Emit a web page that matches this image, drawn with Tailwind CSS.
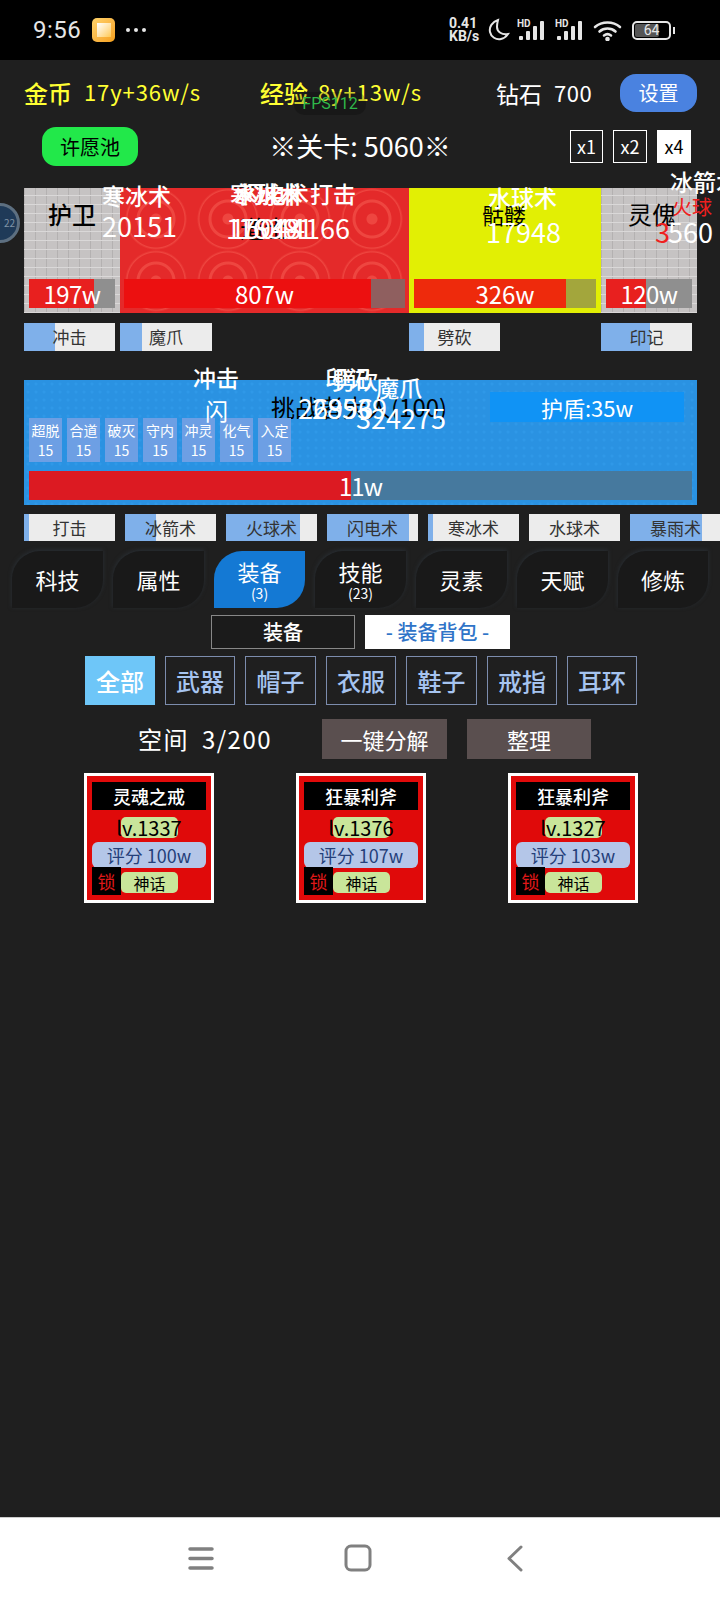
<!DOCTYPE html>
<html lang="zh">
<head>
<meta charset="UTF-8">
<meta name="viewport" content="width=device-width, initial-scale=1.0">
<title>挂机</title>
<script src="https://cdn.jsdelivr.net/npm/@tailwindcss/browser@4"></script>
</head>
<body class="bg-[#1f1f1f]">
<div class="relative w-[720px] h-[1600px] overflow-hidden flex flex-col bg-[#1f1f1f] text-white font-['Noto_Sans_CJK_SC',sans-serif]">

  <!-- status bar -->
  <div class="h-[60px] bg-black flex items-center pl-[33px] pr-[45px] font-['Roboto',sans-serif]">
    <span class="text-[24px] text-[#e6e6e6] tracking-[0.5px]">9:56</span>
    <div class="ml-[11px] w-[23px] h-[24px] rounded-[5px] bg-gradient-to-br from-[#ffd36a] to-[#f59f17] flex items-center justify-center">
      <div class="w-[14px] h-[14px] bg-gradient-to-br from-white to-[#ffc94d]"></div>
    </div>
    <span class="ml-[11px] flex gap-[4px]">
      <i class="w-[4px] h-[4px] rounded-full bg-[#e6e6e6]"></i><i class="w-[4px] h-[4px] rounded-full bg-[#e6e6e6]"></i><i class="w-[4px] h-[4px] rounded-full bg-[#e6e6e6]"></i>
    </span>
    <div class="ml-auto flex items-center text-[#e6e6e6]">
      <div class="text-[14px] leading-[13px] font-bold w-[33px]">0.41<br>KB/s</div>
      <svg class="ml-[6px]" width="22" height="24" viewBox="0 0 22 24" fill="none" stroke="#e6e6e6" stroke-width="2"><path d="M10 2C4 4 1 9 2 14c1 5 6 8 11 7 3-.6 5-2 7-5-6 1-11-2-11-7 0-3 .5-5 1-7z"/></svg>
      <svg class="ml-[7px]" width="30" height="22" viewBox="0 0 30 22" fill="#e6e6e6"><text x="0" y="8" font-size="10" font-weight="700" font-family="Roboto">HD</text><rect x="2" y="17" width="4" height="4" rx="1"/><rect x="9" y="12" width="4" height="9" rx="1"/><rect x="16" y="7" width="4" height="14" rx="1"/><rect x="23" y="2" width="4" height="19" rx="1"/></svg>
      <svg class="ml-[8px]" width="30" height="22" viewBox="0 0 30 22" fill="#e6e6e6"><text x="0" y="8" font-size="10" font-weight="700" font-family="Roboto">HD</text><rect x="2" y="17" width="4" height="4" rx="1"/><rect x="9" y="12" width="4" height="9" rx="1"/><rect x="16" y="7" width="4" height="14" rx="1"/><rect x="23" y="2" width="4" height="19" rx="1"/></svg>
      <svg class="ml-[8px]" width="29" height="22" viewBox="0 0 29 22" fill="none" stroke="#e6e6e6" stroke-width="2.6" stroke-linecap="round"><path d="M2 8c7-6 18-6 25 0"/><path d="M6.500 12.500c4.500-4 11.500-4 16 0"/><path d="M11 16.500c2-1.500 5-1.500 7 0"/><circle cx="14.500" cy="20" r="1" fill="#e6e6e6"/></svg>
      <div class="ml-[10px] relative w-[39px] h-[19px] rounded-[5px] border-2 border-[#e6e6e6] flex items-center justify-center text-[14px] leading-none">
        <div class="absolute left-[1px] top-[1px] bottom-[1px] w-[24px] bg-[#555] rounded-[2px]"></div>
        <span class="relative">64</span>
      </div>
      <div class="ml-[2px] w-[2px] h-[7px] bg-[#e6e6e6]"></div>
    </div>
  </div>

  <!-- currency row -->
  <div class="mt-[14px] h-[38px] flex items-center pl-[24px] text-[#ffff33]">
    <div class="w-[236px] flex items-center">
      <span class="text-[24px] font-medium">金币</span><span class="ml-[12px] text-[22px] tracking-[0.9px] -mt-[3px]">17y+36w/s</span>
    </div>
    <div class="w-[236px] flex items-center">
      <span class="text-[24px] font-medium">经验</span><span class="ml-[10px] text-[22px] tracking-[0.9px] -mt-[3px]">8y+13w/s</span>
    </div>
    <div class="w-[124px] flex items-center text-white">
      <span class="text-[23px]">钻石</span><span class="ml-[12px] text-[22px] tracking-[0.5px] -mt-[2px]">700</span>
    </div>
    <button class="w-[77px] h-[38px] rounded-[16px] bg-[#4a82e0] text-white text-[20px]">设置</button>
  </div>

  <!-- level row -->
  <div class="mt-[15px] h-[39px] flex items-center pl-[42px] relative">
    <button class="w-[96px] h-[39px] rounded-[14px] bg-[#22e84a] text-black text-[20px]">许愿池</button>
    <div class="absolute left-[265px] w-[190px] text-center text-[27px] whitespace-nowrap">※关卡: 5060※</div>
    <div class="ml-auto mr-[29px] flex gap-[10px] text-[18px]">
      <div class="w-[33px] h-[33px] border border-white flex items-center justify-center">x1</div>
      <div class="w-[34px] h-[33px] border border-white flex items-center justify-center">x2</div>
      <div class="w-[34px] h-[33px] bg-white text-black flex items-center justify-center">x4</div>
    </div>
  </div>

  <!-- enemies -->
  <div class="mt-[22px] ml-[24px] w-[673px] h-[125px] flex">
    <div class="w-[96px] p-[5px] flex flex-col justify-end bg-[#c6c3c3] bg-[repeating-linear-gradient(0deg,#dad8d8_0px,#dad8d8_1px,transparent_1px,transparent_9px),repeating-linear-gradient(90deg,#b4b1b1_0px,#b4b1b1_1px,transparent_1px,transparent_11px)]">
      <div class="relative h-[29px] bg-[#8f8f8f] flex items-center justify-center">
        <div class="absolute left-0 top-0 bottom-0 w-[65px] bg-[#e8201f]"></div>
        <span class="relative text-[24px] leading-none tracking-[-0.5px]">197w</span>
      </div>
    </div>
    <div class="w-[289px] p-[4px] pb-[5px] flex flex-col justify-end bg-[#e42a2a] bg-[radial-gradient(circle_at_center,#ee4640_0px,#ee4640_5px,transparent_6px,transparent_16px,#ee4640_17px,#ee4640_19px,transparent_20px,transparent_28px,#ee4640_29px,transparent_31px)] bg-[length:72px_62px]">
      <div class="relative h-[29px] bg-[#8f5f5f] flex items-center justify-center">
        <div class="absolute left-0 top-0 bottom-0 w-[247px] bg-[#ec1010]"></div>
        <span class="relative text-[24px] leading-none">807w</span>
      </div>
    </div>
    <div class="w-[192px] p-[5px] flex flex-col justify-end bg-[#e2ef04]">
      <div class="relative h-[29px] bg-[#a3a63c] flex items-center justify-center">
        <div class="absolute left-0 top-0 bottom-0 w-[152px] bg-[#ee2a0c]"></div>
        <span class="relative text-[24px] leading-none">326w</span>
      </div>
    </div>
    <div class="w-[96px] p-[5px] flex flex-col justify-end bg-[#c6c3c3] bg-[repeating-linear-gradient(0deg,#dad8d8_0px,#dad8d8_1px,transparent_1px,transparent_9px),repeating-linear-gradient(90deg,#b4b1b1_0px,#b4b1b1_1px,transparent_1px,transparent_11px)]">
      <div class="relative h-[29px] bg-[#8f8f8f] flex items-center justify-center">
        <div class="absolute left-0 top-0 bottom-0 w-[40px] bg-[#e8201f]"></div>
        <span class="relative text-[24px] leading-none tracking-[-0.5px]">120w</span>
      </div>
    </div>
  </div>

  <!-- enemy skills -->
  <div class="mt-[10px] ml-[24px] h-[28px] flex text-[17px] text-[#333]">
    <div class="relative w-[91px] bg-[#ececec] flex items-center justify-center"><div class="absolute left-0 inset-y-0 w-[31px] bg-[#7fb0ea]"></div><span class="relative">冲击</span></div>
    <div class="relative ml-[5px] w-[92px] bg-[#ececec] flex items-center justify-center"><div class="absolute left-0 inset-y-0 w-[22px] bg-[#7fb0ea]"></div><span class="relative">魔爪</span></div>
    <div class="relative ml-[197px] w-[91px] bg-[#ececec] flex items-center justify-center"><div class="absolute left-0 inset-y-0 w-[15px] bg-[#7fb0ea]"></div><span class="relative">劈砍</span></div>
    <div class="relative ml-[101px] w-[91px] bg-[#ececec] flex items-center justify-center"><div class="absolute left-0 inset-y-0 w-[49px] bg-[#7fb0ea]"></div><span class="relative">印记</span></div>
  </div>

  <!-- player -->
  <div class="relative mt-[29px] ml-[24px] w-[673px] h-[125px] px-[5px] pt-[12px] bg-[#2a92e2] bg-[radial-gradient(circle,#2f98e8_1px,transparent_2px)] bg-[length:8px_8px]">
    <div class="h-[30px] flex items-center">
      <div class="ml-[242px] w-[184px] text-black text-[24px] leading-none whitespace-nowrap">挑战者大人(100)</div>
      <div class="ml-[35px] w-[194px] h-[30px] bg-[#1093f5] flex items-center justify-center text-[22px]">护盾:35w</div>
    </div>
    <div class="mt-[-4px] flex gap-[5px] text-[14px] leading-[20px] text-center">
      <div class="w-[33px] h-[44px] bg-[#6d9fe4] py-[2px]">超脱<br>15</div>
      <div class="w-[33px] h-[44px] bg-[#6d9fe4] py-[2px]">合道<br>15</div>
      <div class="w-[33px] h-[44px] bg-[#6d9fe4] py-[2px]">破灭<br>15</div>
      <div class="w-[34px] h-[44px] bg-[#6d9fe4] py-[2px]">守内<br>15</div>
      <div class="w-[33px] h-[44px] bg-[#6d9fe4] py-[2px]">冲灵<br>15</div>
      <div class="w-[33px] h-[44px] bg-[#6d9fe4] py-[2px]">化气<br>15</div>
      <div class="w-[33px] h-[44px] bg-[#6d9fe4] py-[2px]">入定<br>15</div>
    </div>
    <div class="relative mt-[9px] h-[29px] bg-[#46799e] flex items-center justify-center">
      <div class="absolute left-0 inset-y-0 w-[322px] bg-[#dc1a22]"></div>
      <span class="relative text-[24px] leading-none tracking-[-1px]">11w</span>
    </div>
  </div>

  <!-- player skills -->
  <div class="mt-[9px] ml-[24px] h-[27px] flex gap-[10px] text-[17px] text-[#333] w-[720px]">
    <div class="relative w-[91px] shrink-0 bg-[#ececec] flex items-center justify-center"><div class="absolute left-0 inset-y-0 w-[5px] bg-[#7fb0ea]"></div><span class="relative">打击</span></div>
    <div class="relative w-[91px] shrink-0 bg-[#ececec] flex items-center justify-center"><div class="absolute left-0 inset-y-0 w-[31px] bg-[#7fb0ea]"></div><span class="relative">冰箭术</span></div>
    <div class="relative w-[91px] shrink-0 bg-[#ececec] flex items-center justify-center"><div class="absolute left-0 inset-y-0 w-[74px] bg-[#7fb0ea]"></div><span class="relative">火球术</span></div>
    <div class="relative w-[91px] shrink-0 bg-[#ececec] flex items-center justify-center"><div class="absolute left-0 inset-y-0 w-[82px] bg-[#7fb0ea]"></div><span class="relative">闪电术</span></div>
    <div class="relative w-[91px] shrink-0 bg-[#ececec] flex items-center justify-center"><div class="absolute left-0 inset-y-0 w-[5px] bg-[#7fb0ea]"></div><span class="relative">寒冰术</span></div>
    <div class="relative w-[91px] shrink-0 bg-[#ececec] flex items-center justify-center"><span class="relative">水球术</span></div>
    <div class="relative w-[91px] shrink-0 bg-[#ececec] flex items-center justify-center"><div class="absolute left-0 inset-y-0 w-[72px] bg-[#7fb0ea]"></div><span class="relative">暴雨术</span></div>
  </div>

  <!-- main tabs -->
  <div class="mt-[10px] ml-[12px] h-[57px] flex gap-[10px] text-[22px]">
    <div class="w-[91px] rounded-tl-[28px] rounded-br-[28px] bg-[#191919] shadow-[0_-1px_4px_#2a3036] flex items-center justify-center">科技</div>
    <div class="w-[91px] rounded-tl-[28px] rounded-br-[28px] bg-[#191919] shadow-[0_-1px_4px_#2a3036] flex items-center justify-center">属性</div>
    <div class="w-[91px] rounded-tl-[28px] rounded-br-[28px] bg-[#1479d4] flex flex-col items-center justify-center leading-[26px]">装备<span class="text-[14px] leading-[18px]">(3)</span></div>
    <div class="w-[91px] rounded-tl-[28px] rounded-br-[28px] bg-[#191919] shadow-[0_-1px_4px_#2a3036] flex flex-col items-center justify-center leading-[26px]">技能<span class="text-[14px] leading-[18px]">(23)</span></div>
    <div class="w-[91px] rounded-tl-[28px] rounded-br-[28px] bg-[#191919] shadow-[0_-1px_4px_#2a3036] flex items-center justify-center">灵素</div>
    <div class="w-[91px] rounded-tl-[28px] rounded-br-[28px] bg-[#191919] shadow-[0_-1px_4px_#2a3036] flex items-center justify-center">天赋</div>
    <div class="w-[90px] rounded-tl-[28px] rounded-br-[28px] bg-[#191919] shadow-[0_-1px_4px_#2a3036] flex items-center justify-center">修炼</div>
  </div>

  <!-- sub tabs -->
  <div class="mt-[7px] ml-[211px] h-[34px] flex gap-[10px] text-[20px]">
    <div class="w-[144px] border border-[#888] bg-[#1b1b1b] flex items-center justify-center font-medium">装备</div>
    <div class="w-[145px] bg-white text-[#2f74c8] flex items-center justify-center font-medium">- 装备背包 -</div>
  </div>

  <!-- filters -->
  <div class="mt-[7px] ml-[85px] h-[49px] flex gap-[10px] text-[24px] font-medium text-[#a6c4f0]">
    <div class="w-[70px] bg-[#6ec6f8] text-white flex items-center justify-center">全部</div>
    <div class="w-[70px] border border-[#7c8cad] flex items-center justify-center">武器</div>
    <div class="w-[71px] border border-[#7c8cad] flex items-center justify-center">帽子</div>
    <div class="w-[70px] border border-[#7c8cad] flex items-center justify-center">衣服</div>
    <div class="w-[71px] border border-[#7c8cad] flex items-center justify-center">鞋子</div>
    <div class="w-[70px] border border-[#7c8cad] flex items-center justify-center">戒指</div>
    <div class="w-[70px] border border-[#7c8cad] flex items-center justify-center">耳环</div>
  </div>

  <!-- bag space -->
  <div class="mt-[14px] h-[40px] flex items-center pl-[138px]">
    <span class="w-[184px] text-[24px] tracking-[1.5px] [word-spacing:6px] whitespace-nowrap">空间 3/200</span>
    <button class="w-[125px] h-[40px] bg-[#5a4f4f] text-[22px]">一键分解</button>
    <button class="ml-[20px] w-[124px] h-[40px] bg-[#5a4f4f] text-[22px]">整理</button>
  </div>

  <!-- items -->
  <div class="mt-[14px] ml-[84px] h-[130px] flex gap-[82px]">
    <div class="relative w-[130px] h-[130px] border-[3px] border-white bg-[#e00a0a] px-[5px] pt-[6px] flex flex-col items-center">
      <div class="w-full h-[28px] bg-black flex items-center justify-center text-[18px] font-medium">灵魂之戒</div>
      <div class="mt-[7px] w-[57px] h-[21px] rounded-[5px] bg-[#c9e59a] text-black flex items-center justify-center text-[20px] whitespace-nowrap">lv.1337</div>
      <div class="mt-[4px] w-full h-[26px] rounded-[6px] bg-[#b4c6e8] text-[#24407a] flex items-center justify-center text-[18px] whitespace-nowrap">评分 100w</div>
      <div class="absolute left-[5px] top-[91px] w-[29px] h-[28px] bg-black text-[#e01818] flex items-center justify-center text-[18px]">锁</div>
      <div class="absolute left-[34px] top-[96px] w-[57px] h-[21px] rounded-[5px] bg-[#c9e59a] text-black flex items-center justify-center text-[16px]">神话</div>
    </div>
    <div class="relative w-[130px] h-[130px] border-[3px] border-white bg-[#e00a0a] px-[5px] pt-[6px] flex flex-col items-center">
      <div class="w-full h-[28px] bg-black flex items-center justify-center text-[18px] font-medium">狂暴利斧</div>
      <div class="mt-[7px] w-[57px] h-[21px] rounded-[5px] bg-[#c9e59a] text-black flex items-center justify-center text-[20px] whitespace-nowrap">lv.1376</div>
      <div class="mt-[4px] w-full h-[26px] rounded-[6px] bg-[#b4c6e8] text-[#24407a] flex items-center justify-center text-[18px] whitespace-nowrap">评分 107w</div>
      <div class="absolute left-[5px] top-[91px] w-[29px] h-[28px] bg-black text-[#e01818] flex items-center justify-center text-[18px]">锁</div>
      <div class="absolute left-[34px] top-[96px] w-[57px] h-[21px] rounded-[5px] bg-[#c9e59a] text-black flex items-center justify-center text-[16px]">神话</div>
    </div>
    <div class="relative w-[130px] h-[130px] border-[3px] border-white bg-[#e00a0a] px-[5px] pt-[6px] flex flex-col items-center">
      <div class="w-full h-[28px] bg-black flex items-center justify-center text-[18px] font-medium">狂暴利斧</div>
      <div class="mt-[7px] w-[57px] h-[21px] rounded-[5px] bg-[#c9e59a] text-black flex items-center justify-center text-[20px] whitespace-nowrap">lv.1327</div>
      <div class="mt-[4px] w-full h-[26px] rounded-[6px] bg-[#b4c6e8] text-[#24407a] flex items-center justify-center text-[18px] whitespace-nowrap">评分 103w</div>
      <div class="absolute left-[5px] top-[91px] w-[29px] h-[28px] bg-black text-[#e01818] flex items-center justify-center text-[18px]">锁</div>
      <div class="absolute left-[34px] top-[96px] w-[57px] h-[21px] rounded-[5px] bg-[#c9e59a] text-black flex items-center justify-center text-[16px]">神话</div>
    </div>
  </div>

  <!-- nav bar -->
  <div class="mt-auto h-[83px] bg-white border-t border-[#ccc] flex items-center pb-[2px]">
    <svg class="ml-[188px]" width="26" height="25" viewBox="0 0 26 25" stroke="#808080" stroke-width="3.500" stroke-linecap="round"><path d="M2 3h22M2 12.500h22M2 22h22"/></svg>
    <svg class="ml-[130px]" width="28" height="28" viewBox="0 0 28 28" fill="none" stroke="#808080" stroke-width="3"><rect x="2" y="2" width="24" height="24" rx="5"/></svg>
    <svg class="ml-[134px]" width="18" height="27" viewBox="0 0 18 27" fill="none" stroke="#808080" stroke-width="3" stroke-linecap="round" stroke-linejoin="round"><path d="M15 2 3 13.500 15 25"/></svg>
  </div>

  <!-- floating overlays -->
  <div class="absolute left-[294px] top-[92px] w-[72px] h-[23px] rounded-[10px] bg-black/20 text-[#2fb84a] text-[16px] leading-[23px] text-center font-['Roboto',sans-serif]">FPS112</div>
  <div class="absolute left-[-20px] top-[203px] w-[40px] h-[40px] rounded-full bg-[#1f3a58] border-[3px] border-[#5d6f80] text-[#7f93a6] text-[10px] leading-[34px] text-right pr-[2px]">22</div>

  <div class="absolute left-[48px] top-[196px] text-black text-[24px] font-medium whitespace-nowrap">护卫</div>
  <div class="absolute left-[240px] top-[210px] text-black text-[24px] whitespace-nowrap">道士</div>
  <div class="absolute left-[482px] top-[198px] text-black text-[22px] whitespace-nowrap">骷髅</div>
  <div class="absolute left-[628px] top-[196px] text-black text-[24px] whitespace-nowrap">灵傀</div>

  <div class="absolute left-[102px] top-[178px] text-[23px] font-medium whitespace-nowrap">寒冰术</div>
  <div class="absolute left-[102px] top-[206px] text-[27px] whitespace-nowrap">20151</div>
  <div class="absolute left-[230px] top-[176px] text-[23px] font-medium whitespace-nowrap">寒冰术</div>
  <div class="absolute left-[234px] top-[176px] text-[23px] font-medium whitespace-nowrap">水球术</div>
  <div class="absolute left-[240px] top-[176px] text-[23px] font-medium whitespace-nowrap">闪电术</div>
  <div class="absolute left-[310px] top-[176px] text-[23px] font-medium whitespace-nowrap">打击</div>
  <div class="absolute left-[226px] top-[208px] text-[27px] whitespace-nowrap">17948</div>
  <div class="absolute left-[230px] top-[208px] text-[27px] whitespace-nowrap">15044</div>
  <div class="absolute left-[238px] top-[208px] text-[27px] whitespace-nowrap">16391</div>
  <div class="absolute left-[290px] top-[208px] text-[27px] whitespace-nowrap">4166</div>
  <div class="absolute left-[488px] top-[180px] text-[23px] font-medium whitespace-nowrap">水球术</div>
  <div class="absolute left-[486px] top-[212px] text-[27px] whitespace-nowrap">17948</div>
  <div class="absolute left-[670px] top-[164px] text-[23px] font-medium whitespace-nowrap">冰箭术</div>
  <div class="absolute left-[655px] top-[212px] text-[#ee2020] text-[27px] whitespace-nowrap">3</div>
  <div class="absolute left-[672px] top-[192px] text-[#ee2020] text-[20px] whitespace-nowrap">火球</div>
  <div class="absolute left-[668px] top-[212px] text-[27px] whitespace-nowrap">560</div>

  <div class="absolute left-[193px] top-[360px] text-[23px] font-medium whitespace-nowrap">冲击</div>
  <div class="absolute left-[205px] top-[393px] text-[23px] whitespace-nowrap">闪</div>
  <div class="absolute left-[325px] top-[360px] text-[23px] font-medium whitespace-nowrap">印记</div>
  <div class="absolute left-[332px] top-[362px] text-[23px] font-medium whitespace-nowrap">劈砍</div>
  <div class="absolute left-[376px] top-[370px] text-[23px] font-medium whitespace-nowrap">魔爪</div>
  <div class="absolute left-[298px] top-[388px] text-[27px] whitespace-nowrap">26996</div>
  <div class="absolute left-[312px] top-[388px] text-[27px] whitespace-nowrap">28539</div>
  <div class="absolute left-[356px] top-[398px] text-[27px] whitespace-nowrap">324275</div>
</div>
</body>
</html>
